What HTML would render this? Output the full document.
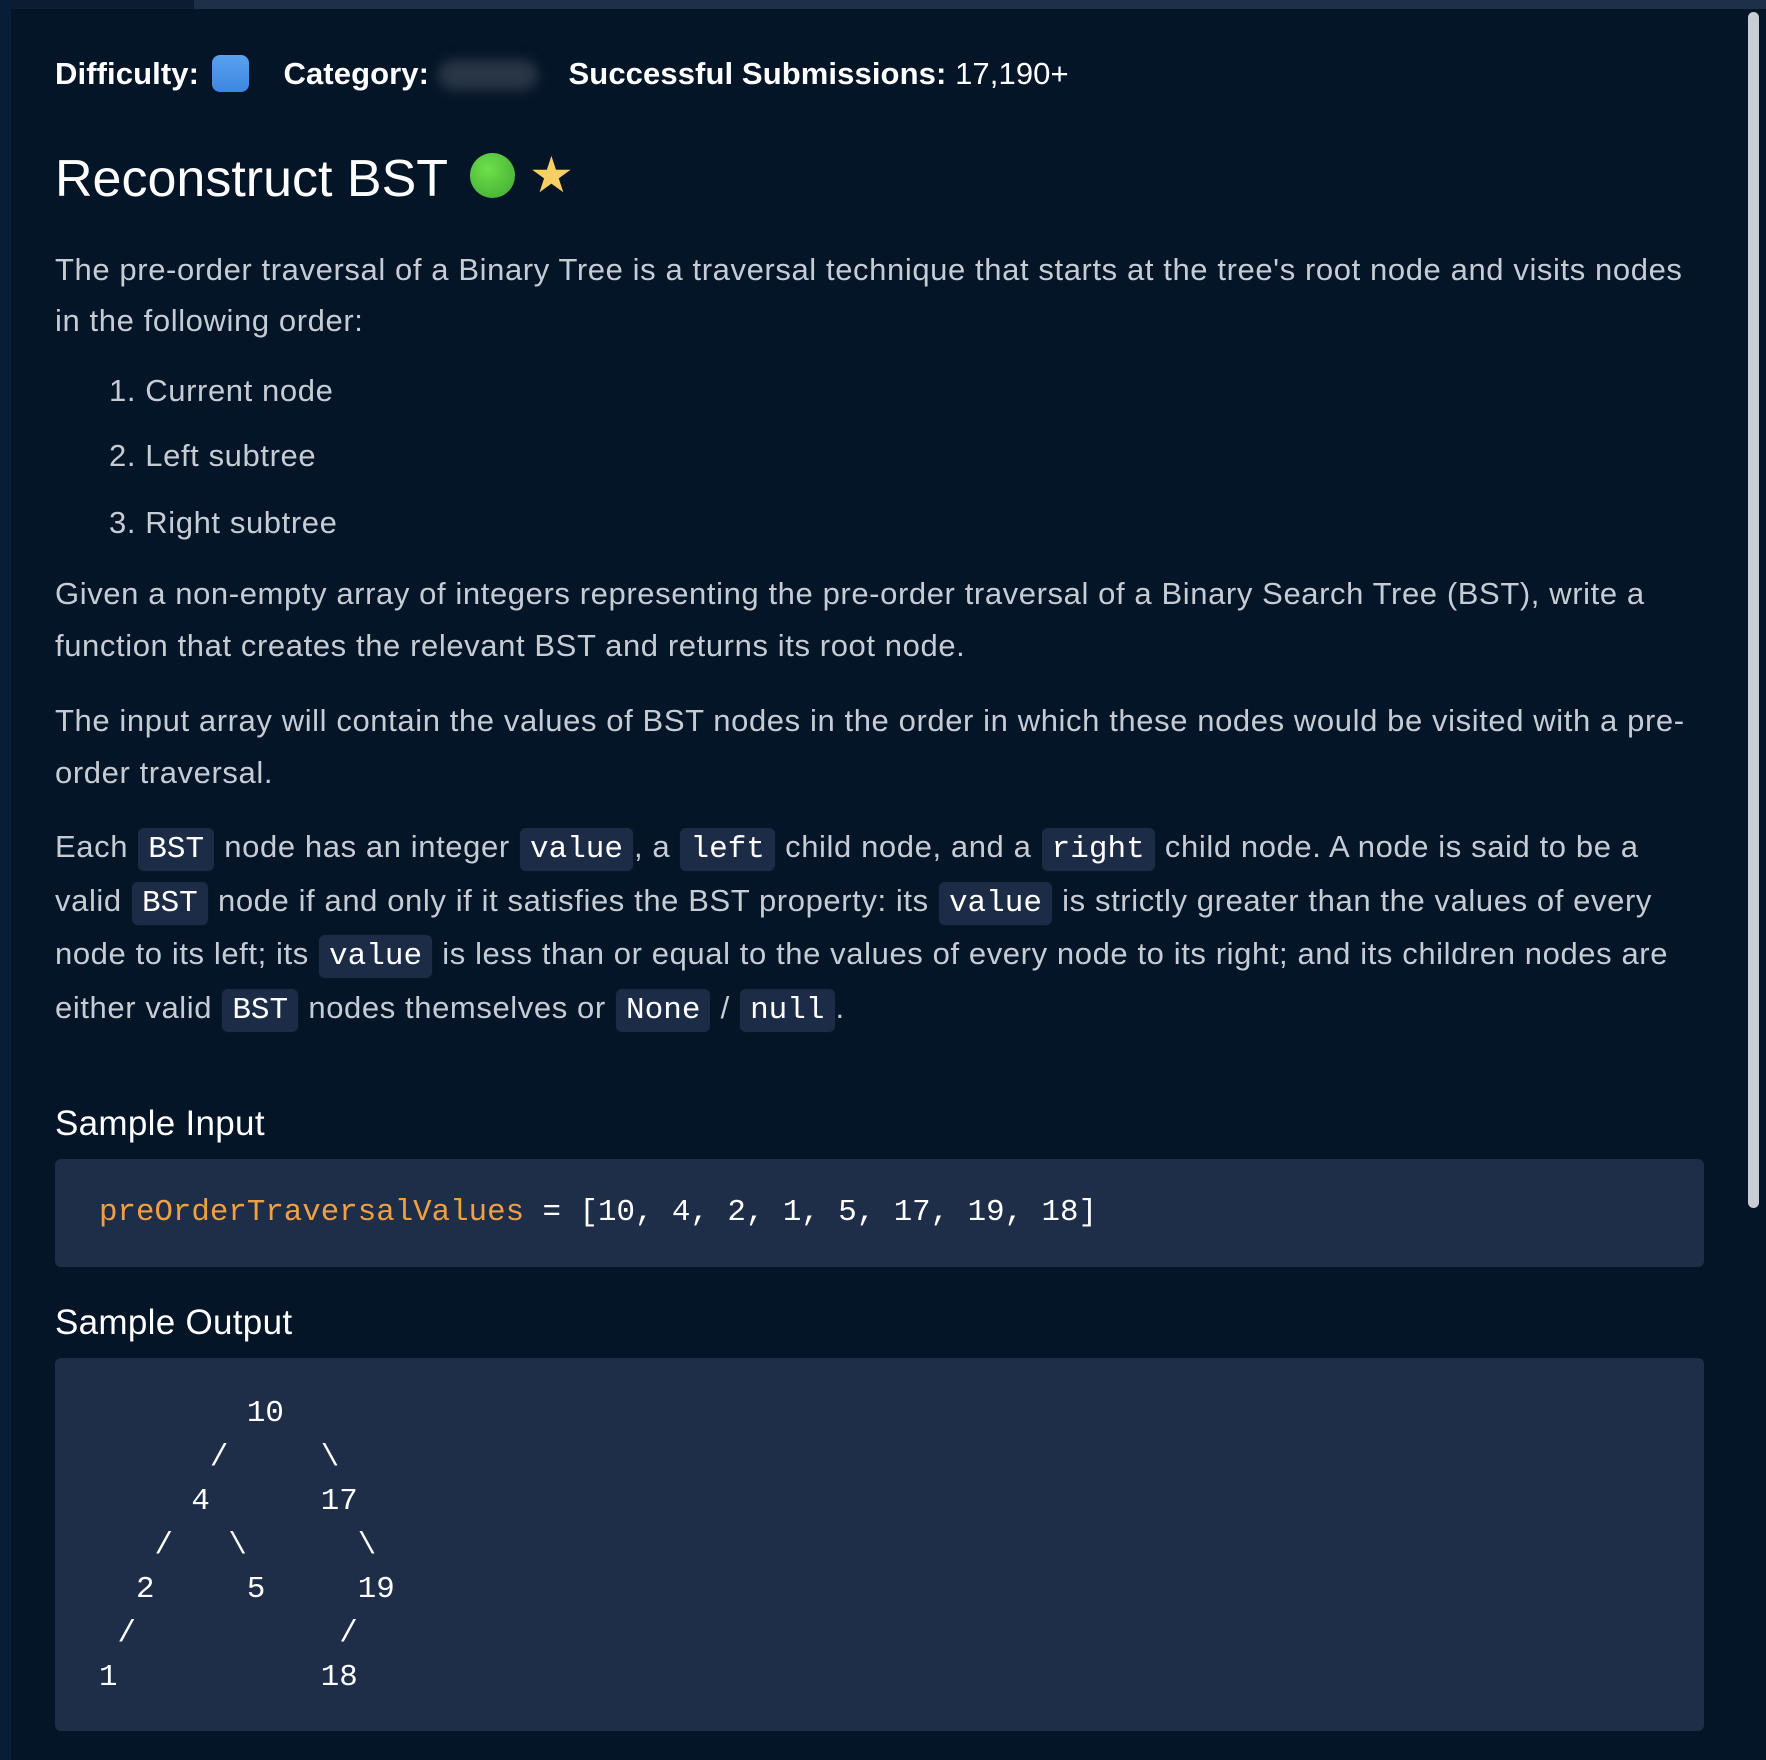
<!DOCTYPE html>
<html><head><meta charset="utf-8"><style>
html,body{margin:0;padding:0}
body{width:1766px;height:1760px;background:#041528;position:relative;overflow:hidden;font-family:"Liberation Sans",sans-serif;color:#c6ccd4}
.topl{position:absolute;left:0;top:0;width:194px;height:9px;background:#0b1c33}
.topr{position:absolute;left:194px;top:0;right:0;height:9px;background:#1e2f4a}
.lstrip{position:absolute;left:0;top:0;width:11px;height:1760px;background:#0a1d36}
.sb{position:absolute;left:1748px;top:12px;width:11px;height:1196px;background:#c9ccd1;border-radius:6px}
.l{position:absolute;left:55px;white-space:nowrap;font-size:31px;letter-spacing:0.6px;height:52px;line-height:52px}
.code{font-family:"Liberation Mono",monospace;color:#fff;background:#1c2c47;border:1px solid #0a1526;border-radius:7px;padding:4px 10px;font-size:31px;letter-spacing:0}
.meta{position:absolute;top:52px;left:55px;font-size:31px;letter-spacing:0.1px;color:#fff;white-space:nowrap;line-height:44px}
.meta b{font-weight:bold}
h1{position:absolute;left:55px;top:140px;margin:0;font-size:52px;font-weight:normal;color:#fff;line-height:70px}
h2{position:absolute;left:55px;margin:0;font-size:35px;letter-spacing:0.3px;font-weight:normal;color:#fff;line-height:44px}
.box{position:absolute;left:55px;width:1649px;background:#1e2e48;border-radius:6px}
pre{margin:0;font-family:"Liberation Mono",monospace;color:#fff}
</style></head><body>
<div class="topl"></div><div class="topr"></div><div class="lstrip"></div><div class="sb"></div>
<div class="meta"><b>Difficulty:</b> <span style="display:inline-block;width:37px;height:37px;border-radius:8px;background:linear-gradient(#5aa2ee,#3c86e0);vertical-align:-8px;margin-left:4px"></span>
<b style="margin-left:26px">Category:</b> <span style="display:inline-block;width:100px;height:30px;border-radius:15px;background:#2a3646;filter:blur(6px);vertical-align:-6px"></span>
<b style="margin-left:22px">Successful Submissions:</b> 17,190+</div>
<h1>Reconstruct BST <span style="display:inline-block;width:45px;height:45px;border-radius:50%;background:radial-gradient(circle at 40% 35%,#6ee04a,#3fa832);vertical-align:-2px;margin-left:8px"></span> <span style="color:#f7cf63;font-size:50px;vertical-align:4px">★</span></h1>
<div class="l" style="top:244px">The pre-order traversal of a Binary Tree is a traversal technique that starts at the tree's root node and visits nodes</div>
<div class="l" style="top:295px">in the following order:</div>
<div class="l" style="top:365px;left:109px">1. Current node</div>
<div class="l" style="top:430px;left:109px">2. Left subtree</div>
<div class="l" style="top:497px;left:109px">3. Right subtree</div>
<div class="l" style="top:568px">Given a non-empty array of integers representing the pre-order traversal of a Binary Search Tree (BST), write a</div>
<div class="l" style="top:620px">function that creates the relevant BST and returns its root node.</div>
<div class="l" style="top:695px">The input array will contain the values of BST nodes in the order in which these nodes would be visited with a pre-</div>
<div class="l" style="top:747px">order traversal.</div>
<div class="l" style="top:821px">Each <span class="code">BST</span> node has an integer <span class="code">value</span>, a <span class="code">left</span> child node, and a <span class="code">right</span> child node. A node is said to be a</div>
<div class="l" style="top:875px">valid <span class="code">BST</span> node if and only if it satisfies the BST property: its <span class="code">value</span> is strictly greater than the values of every</div>
<div class="l" style="top:928px">node to its left; its <span class="code">value</span> is less than or equal to the values of every node to its right; and its children nodes are</div>
<div class="l" style="top:982px">either valid <span class="code">BST</span> nodes themselves or <span class="code">None</span> / <span class="code">null</span>.</div>
<h2 style="top:1102px">Sample Input</h2>
<div class="box" style="top:1159px;height:108px"><pre style="position:absolute;left:44px;top:36px;font-size:30.8px"><span style="color:#f0a042">preOrderTraversalValues</span> = [10, 4, 2, 1, 5, 17, 19, 18]</pre></div>
<h2 style="top:1301px">Sample Output</h2>
<div class="box" style="top:1358px;height:373px"><pre style="position:absolute;left:44px;top:34px;line-height:44px;font-size:30.8px">        10
      /     \
     4      17
   /   \      \
  2     5     19
 /           /
1           18</pre></div>
</body></html>
